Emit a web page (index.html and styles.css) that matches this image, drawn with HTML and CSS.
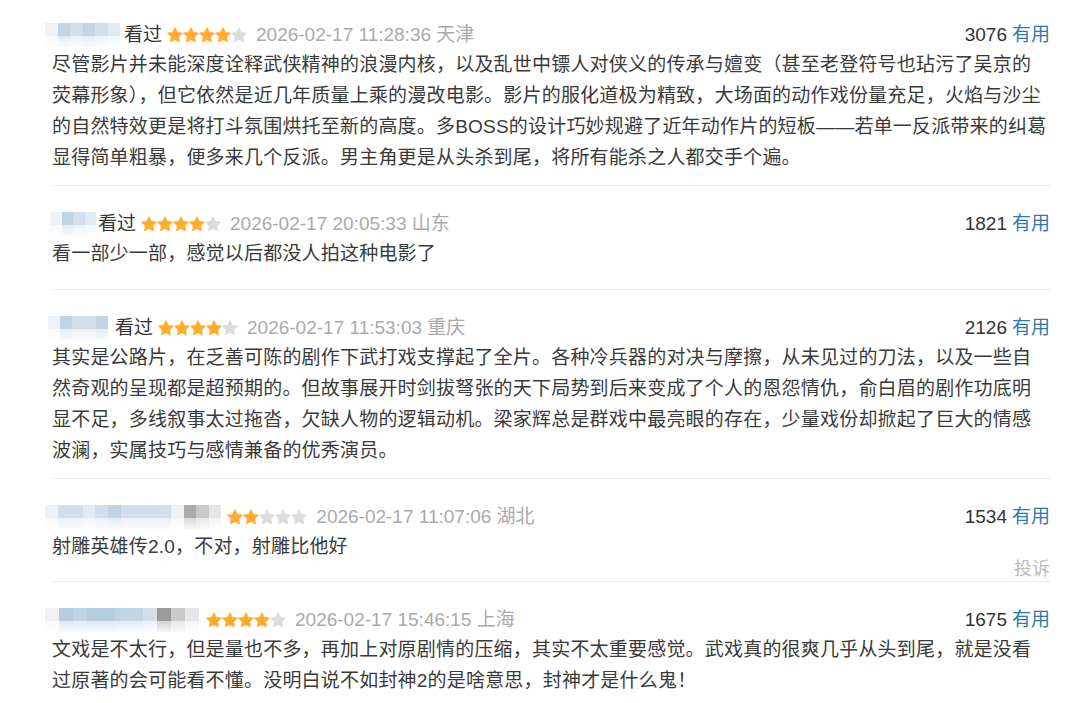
FILE: index.html
```html
<!DOCTYPE html>
<html lang="zh-CN">
<head>
<meta charset="utf-8">
<title>短评</title>
<link rel="stylesheet" href="styles.css">
</head>
<body>
<svg class="defs" width="0" height="0" aria-hidden="true">
  <symbol id="star" viewBox="1 1 22 22">
    <path d="M12 1.8L15.29 8.27 22.46 9.4 17.33 14.53 18.47 21.7 12 18.4 5.53 21.7 6.67 14.53 1.54 9.4 8.71 8.27z" stroke-width="0.8" stroke-linejoin="round"/>
  </symbol>
</svg>
<div class="list">

  <div class="comment">
    <div class="head">
      <span class="mosaic"><i class="c0"></i><i class="c2"></i><i class="c3"></i><i class="c2"></i><i class="c3"></i><i class="c4"></i></span>
      <span class="watched">看过</span>
      <span class="stars"><svg class="on"><use href="#star"/></svg><svg class="on"><use href="#star"/></svg><svg class="on"><use href="#star"/></svg><svg class="on"><use href="#star"/></svg><svg class="off"><use href="#star"/></svg></span>
      <span class="time">2026-02-17 11:28:36 天津</span>
      <span class="votes"><span class="count">3076</span><a class="useful">有用</a></span>
    </div>
    <p class="text">尽管影片并未能深度诠释武侠精神的浪漫内核，以及乱世中镖人对侠义的传承与嬗变（甚至老登符号也玷污了吴京的荧幕形象），但它依然是近几年质量上乘的漫改电影。影片的服化道极为精致，大场面的动作戏份量充足，火焰与沙尘的自然特效更是将打斗氛围烘托至新的高度。多BOSS的设计巧妙规避了近年动作片的短板——若单一反派带来的纠葛显得简单粗暴，便多来几个反派。男主角更是从头杀到尾，将所有能杀之人都交手个遍。</p>
  </div>

  <div class="comment brief">
    <div class="head">
      <span class="mosaic short"><i class="c0"></i><i class="c2"></i><i class="c3"></i><i class="c4"></i></span>
      <span class="watched">看过</span>
      <span class="stars"><svg class="on"><use href="#star"/></svg><svg class="on"><use href="#star"/></svg><svg class="on"><use href="#star"/></svg><svg class="on"><use href="#star"/></svg><svg class="off"><use href="#star"/></svg></span>
      <span class="time">2026-02-17 20:05:33 山东</span>
      <span class="votes"><span class="count">1821</span><a class="useful">有用</a></span>
    </div>
    <p class="text">看一部少一部，感觉以后都没人拍这种电影了</p>
  </div>

  <div class="comment">
    <div class="head">
      <span class="mosaic mid"><i class="c0"></i><i class="c2"></i><i class="c3"></i><i class="c3"></i><i class="c2"></i></span>
      <span class="watched">看过</span>
      <span class="stars"><svg class="on"><use href="#star"/></svg><svg class="on"><use href="#star"/></svg><svg class="on"><use href="#star"/></svg><svg class="on"><use href="#star"/></svg><svg class="off"><use href="#star"/></svg></span>
      <span class="time">2026-02-17 11:53:03 重庆</span>
      <span class="votes"><span class="count">2126</span><a class="useful">有用</a></span>
    </div>
    <p class="text">其实是公路片，在乏善可陈的剧作下武打戏支撑起了全片。各种冷兵器的对决与摩擦，从未见过的刀法，以及一些自然奇观的呈现都是超预期的。但故事展开时剑拔弩张的天下局势到后来变成了个人的恩怨情仇，俞白眉的剧作功底明显不足，多线叙事太过拖沓，欠缺人物的逻辑动机。梁家辉总是群戏中最亮眼的存在，少量戏份却掀起了巨大的情感波澜，实属技巧与感情兼备的优秀演员。</p>
  </div>

  <div class="comment">
    <div class="head">
      <span class="mosaic long"><i class="c0"></i><i class="c3"></i><i class="c3"></i><i class="c4"></i><i class="c3"></i><i class="c2"></i><i class="c3"></i><i class="c3"></i><i class="c3"></i><i class="c3"></i><i class="c0"></i><i class="g1"></i><i class="g2"></i><i class="g3"></i></span>
      <span class="stars"><svg class="on"><use href="#star"/></svg><svg class="on"><use href="#star"/></svg><svg class="off"><use href="#star"/></svg><svg class="off"><use href="#star"/></svg><svg class="off"><use href="#star"/></svg></span>
      <span class="time">2026-02-17 11:07:06 湖北</span>
      <span class="votes"><span class="count">1534</span><a class="useful">有用</a></span>
    </div>
    <p class="text">射雕英雄传2.0，不对，射雕比他好</p>
    <div class="report"><a>投诉</a></div>
  </div>

  <div class="comment">
    <div class="head">
      <span class="mosaic long2"><i class="c0"></i><i class="c1"></i><i class="c2"></i><i class="c1"></i><i class="c1"></i><i class="c2"></i><i class="c2"></i><i class="c3"></i><i class="g0"></i><i class="g2"></i><i class="g3"></i></span>
      <span class="stars"><svg class="on"><use href="#star"/></svg><svg class="on"><use href="#star"/></svg><svg class="on"><use href="#star"/></svg><svg class="on"><use href="#star"/></svg><svg class="off"><use href="#star"/></svg></span>
      <span class="time">2026-02-17 15:46:15 上海</span>
      <span class="votes"><span class="count">1675</span><a class="useful">有用</a></span>
    </div>
    <p class="text">文戏是不太行，但是量也不多，再加上对原剧情的压缩，其实不太重要感觉。武戏真的很爽几乎从头到尾，就是没看过原著的会可能看不懂。没明白说不如封神2的是啥意思，封神才是什么鬼！</p>
  </div>

</div>
</body>
</html>
```

FILE: styles.css
```css
html, body {
  margin: 0;
  padding: 0;
  background: #fff;
}

body {
  font-family: "Liberation Sans", "Noto Sans CJK SC", sans-serif;
  color: #333;
  font-size: 19px;
}

.defs {
  position: absolute;
  width: 0;
  height: 0;
  overflow: hidden;
}

.list {
  padding: 0 30px 0 52px;
}

.comment {
  padding: 24px 0 12px;
  border-bottom: 1px solid #ebebeb;
}

.comment.brief {
  padding-bottom: 20px;
}

.comment:first-child {
  padding-top: 21px;
}

.comment:last-child {
  border-bottom: none;
}

.head {
  display: flex;
  align-items: center;
  height: 28px;
  line-height: 28px;
  white-space: nowrap;
}

.mosaic {
  display: flex;
  height: 24px;
  margin-left: -7px;
  margin-right: 4px;
  filter: blur(0.6px);
  position: relative;
}

.mosaic::after {
  content: "";
  position: absolute;
  left: 0;
  right: 0;
  bottom: 0;
  height: 11px;
  background: linear-gradient(rgba(255,255,255,0.55), rgba(255,255,255,0.9));
}

.mosaic i {
  display: block;
  width: 12.5px;
  height: 24px;
}

.mosaic.short { margin-left: -2px; margin-right: 2px; }
.mosaic.short i { width: 11.5px; }
.mosaic.mid { margin-left: -4px; margin-right: 7px; }
.mosaic.mid i { width: 12px; }
.mosaic.long { margin-right: 6px; }
.mosaic.long i { width: 12.6px; }
.mosaic.long2 { margin-right: 7px; }
.mosaic.long2 i { width: 14px; }

.c0 { background: #eef2f6; }
.c1 { background: #b6cde0; }
.c2 { background: #c0d4e4; }
.c3 { background: #d2dfeb; }
.c4 { background: #e2eaf1; }
.g0 { background: #9a9a9a; }
.g1 { background: #ababab; }
.g2 { background: #c9c9c9; }
.g3 { background: #e6e6e6; }

.watched {
  color: #333;
  margin-right: 5px;
}

.stars {
  display: flex;
  align-items: center;
  margin-right: 9px;
}

.stars svg {
  width: 16px;
  height: 16px;
  display: block;
}

.stars .on { fill: #ffac2d; stroke: #ffac2d; }
.stars .off { fill: #dcdcdc; stroke: #dcdcdc; }

.time {
  color: #aaa;
}

.votes {
  margin-left: auto;
  display: flex;
  gap: 5px;
}

.count {
  color: #333;
}

.useful {
  color: #3377aa;
  cursor: pointer;
}

.text {
  margin: 0;
  line-height: 31px;
  letter-spacing: 0.2px;
  color: #3a3a3a;
  text-align: left;
}

.report {
  display: flex;
  justify-content: flex-end;
  margin-top: -2px;
  margin-bottom: -9px;
  line-height: 18px;
}

.report a {
  color: #bbb;
  font-size: 18px;
  cursor: pointer;
}
```
